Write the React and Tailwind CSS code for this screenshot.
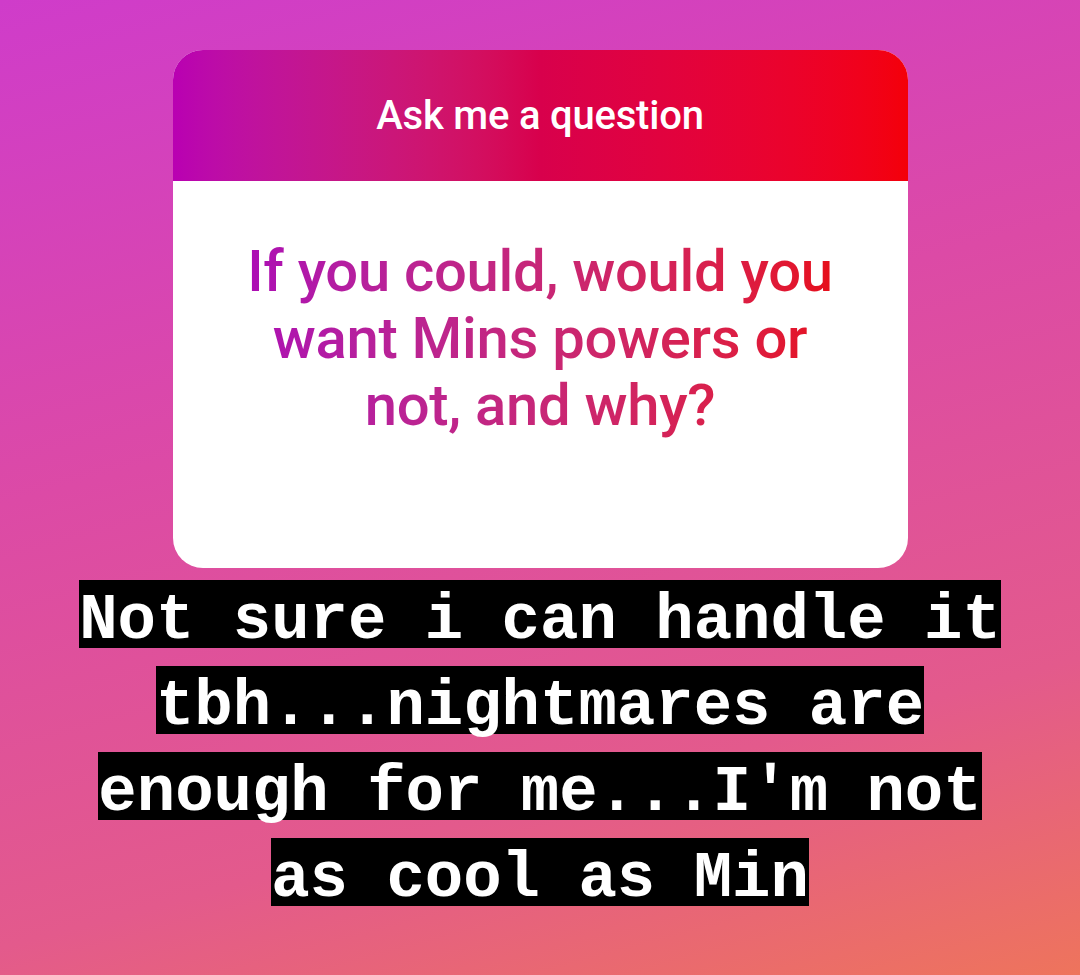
import React from 'react';

const answerLines = [
  'Not sure i can handle it',
  'tbh...nightmares are',
  "enough for me...I'm not",
  'as cool as Min',
];

const App = () => {
  return (
    <div className="min-h-screen w-full bg-[linear-gradient(165deg,#cf3cca_0%,#dc4aa6_40%,#e35a8c_75%,#ee745c_100%)] flex flex-col items-center pt-[50px] overflow-hidden">
      {/* Question sticker */}
      <div className="w-[735px] h-[518px] rounded-[30px] bg-white overflow-hidden flex flex-col">
        <div className="h-[131px] shrink-0 bg-gradient-to-r from-[#b900b2] via-[#d8004c] to-[#f40008] flex items-center justify-center">
          <span className="text-white text-[40px] font-medium font-['Roboto',sans-serif] leading-[47px] tracking-[-0.2px]">
            Ask me a question
          </span>
        </div>
        <div className="flex-1 flex justify-center pt-[57px]">
          <p className="inline-block text-center text-[58px] font-medium font-['Roboto',sans-serif] leading-[67px] tracking-[-0.3px] bg-gradient-to-r from-[#ac0cb4] to-[#e60e18] bg-clip-text text-transparent h-fit">
            If you could, would you
            <br />
            want Mins powers or
            <br />
            not, and why?
          </p>
        </div>
      </div>

      {/* Answer text */}
      <div className="mt-[12px] flex flex-col items-center gap-[18px]">
        {answerLines.map((line) => (
          <span
            key={line}
            className="block h-[68px] bg-black text-white font-bold text-[64px] leading-[82px] font-['Liberation_Mono','Courier_New',monospace] whitespace-pre"
          >
            {line}
          </span>
        ))}
      </div>
    </div>
  );
};

export default App;
